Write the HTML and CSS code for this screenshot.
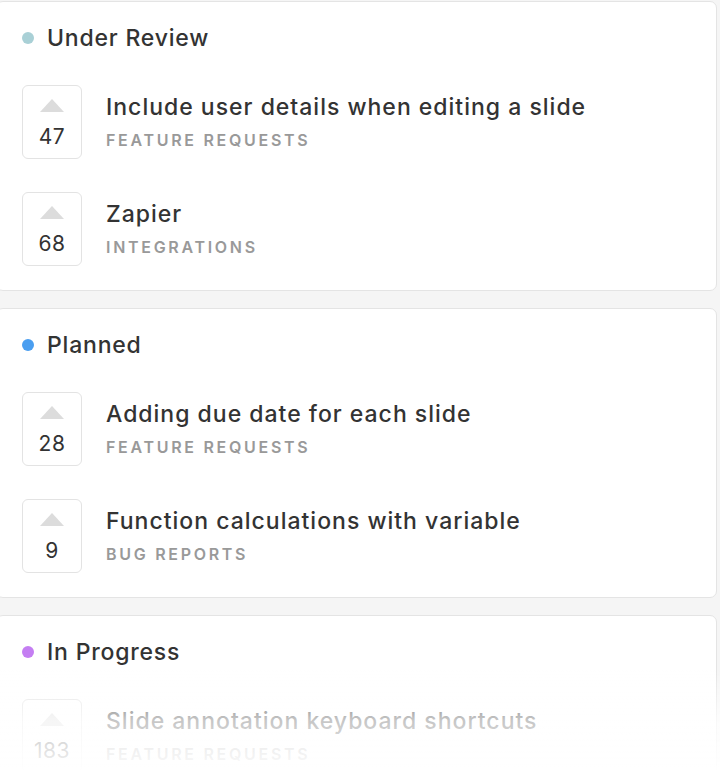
FILE: index.html
```html
<!DOCTYPE html>
<html lang="en">
<head>
<meta charset="utf-8">
<title>Roadmap</title>
<link rel="stylesheet" href="styles.css">
</head>
<body>
<main class="board">
  <section class="card">
    <h2 class="status"><span class="dot dot-review"></span>Under Review</h2>
    <ul class="items">
      <li class="item">
        <div class="vote"><span class="arrow"></span><span class="count">47</span></div>
        <div class="info"><div class="title">Include user details when editing a slide</div><div class="tag">Feature Requests</div></div>
      </li>
      <li class="item">
        <div class="vote"><span class="arrow"></span><span class="count">68</span></div>
        <div class="info"><div class="title">Zapier</div><div class="tag">Integrations</div></div>
      </li>
    </ul>
  </section>
  <section class="card">
    <h2 class="status"><span class="dot dot-planned"></span>Planned</h2>
    <ul class="items">
      <li class="item">
        <div class="vote"><span class="arrow"></span><span class="count">28</span></div>
        <div class="info"><div class="title">Adding due date for each slide</div><div class="tag">Feature Requests</div></div>
      </li>
      <li class="item">
        <div class="vote"><span class="arrow"></span><span class="count">9</span></div>
        <div class="info"><div class="title">Function calculations with variable</div><div class="tag">Bug Reports</div></div>
      </li>
    </ul>
  </section>
  <section class="card">
    <h2 class="status"><span class="dot dot-progress"></span>In Progress</h2>
    <ul class="items">
      <li class="item">
        <div class="vote"><span class="arrow"></span><span class="count">183</span></div>
        <div class="info"><div class="title">Slide annotation keyboard shortcuts</div><div class="tag">Feature Requests</div></div>
      </li>
    </ul>
  </section>
</main>
<div class="fade"></div>
</body>
</html>
```

FILE: styles.css
```css
html, body {
  margin: 0;
  padding: 0;
  height: 100%;
  overflow: hidden;
}
body {
  background: #f5f5f5;
  font-family: Inter, "Noto Sans", "Liberation Sans", sans-serif;
  color: #333;
}
.board {
  display: flex;
  flex-direction: column;
  gap: 17px;
  padding-top: 1px;
  margin-left: -4px;
  width: 721px;
}
.card {
  background: #fff;
  border: 1px solid #e4e4e4;
  border-radius: 7px;
  padding: 22px 24px 24px 25px;
}
.status {
  display: flex;
  align-items: center;
  gap: 13px;
  margin: 0;
  font-size: 23px;
  line-height: 28px;
  font-weight: 500;
  letter-spacing: 0.8px;
  color: #333;
}
.dot {
  width: 12px;
  height: 12px;
  border-radius: 50%;
  flex: none;
}
.dot-review { background: #a9d0d6; }
.dot-planned { background: #4a9ef0; }
.dot-progress { background: #c47ef2; }
.items {
  list-style: none;
  margin: 33px 0 0;
  padding: 0;
  display: flex;
  flex-direction: column;
  gap: 33px;
}
.item {
  display: flex;
  align-items: flex-start;
  gap: 24px;
}
.vote {
  box-sizing: border-box;
  width: 60px;
  height: 74px;
  border: 1px solid #e3e3e3;
  border-radius: 6px;
  display: flex;
  flex-direction: column;
  align-items: center;
  padding-top: 13px;
  flex: none;
}
.arrow {
  width: 0;
  height: 0;
  border-left: 12px solid transparent;
  border-right: 12px solid transparent;
  border-bottom: 13px solid #dcdcdc;
}
.count {
  margin-top: 13px;
  font-size: 21px;
  line-height: 24px;
  font-weight: 400;
  letter-spacing: 0.5px;
  color: #333;
}
.info {
  padding-top: 8px;
}
.title {
  font-size: 23px;
  line-height: 28px;
  font-weight: 500;
  letter-spacing: 1px;
  color: #333;
}
.tag {
  margin-top: 9px;
  font-size: 16px;
  line-height: 20px;
  font-weight: 600;
  letter-spacing: 2.7px;
  text-transform: uppercase;
  color: #999;
}
.fade {
  position: fixed;
  left: 0;
  right: 0;
  top: 670px;
  height: 100px;
  background: linear-gradient(to bottom, rgba(255,255,255,0) 0, rgba(255,255,255,0.72) 50px, rgba(255,255,255,0.95) 100%);
  pointer-events: none;
}
```
